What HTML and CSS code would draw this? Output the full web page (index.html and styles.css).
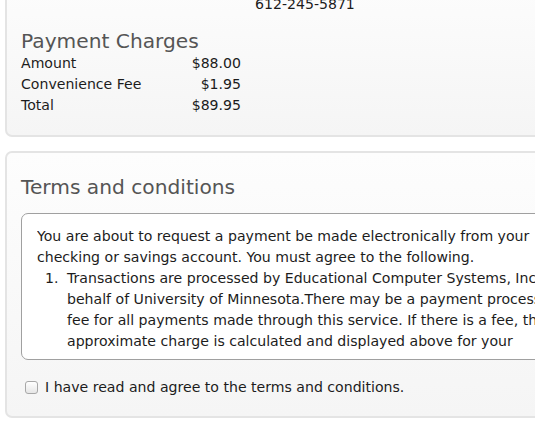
FILE: index.html
```html
<!DOCTYPE html>
<html>
<head>
<meta charset="utf-8">
<link rel="stylesheet" href="styles.css">
</head>
<body>
<section class="panel panel-charges">
  <div class="phone">612-245-5871</div>
  <h2 class="heading">Payment Charges</h2>
  <div class="charges">
    <div class="row"><span class="label">Amount</span><span class="value">$88.00</span></div>
    <div class="row"><span class="label">Convenience Fee</span><span class="value">$1.95</span></div>
    <div class="row"><span class="label">Total</span><span class="value">$89.95</span></div>
  </div>
</section>
<section class="panel panel-terms">
  <h2 class="heading">Terms and conditions</h2>
  <div class="terms-box">
    <div class="terms-scroll">
      <p class="terms-intro">You are about to request a payment be made electronically from your checking or savings account. You must agree to the following.</p>
      <ol class="terms-list">
        <li class="term"><span class="num">1.</span><span class="term-text">Transactions are processed by Educational Computer Systems, Inc. on behalf of University of Minnesota.There may be a payment processing fee for all payments made through this service. If there is a fee, the approximate charge is calculated and displayed above for your review.</span></li>
      </ol>
    </div>
  </div>
  <label class="agree"><input type="checkbox" class="check"><span>I have read and agree to the terms and conditions.</span></label>
</section>
</body>
</html>
```
FILE: styles.css
```css
html, body {
  margin: 0;
  padding: 0;
  overflow: hidden;
  background: #fff;
}
body {
  font-family: "DejaVu Sans", Verdana, sans-serif;
  font-size: 14.1px;
  line-height: 21px;
  color: #1c1c1c;
  width: 535px;
  height: 426px;
}
.panel {
  margin-left: 5px;
  width: 560px;
  border: 2px solid #e4e4e4;
  border-radius: 7px;
  background: linear-gradient(#fdfdfd, #f5f5f5);
  box-sizing: border-box;
}
.panel-charges {
  margin-top: -30px;
  padding: 22px 14px 8px;
  height: 167px;
}
.phone {
  margin-left: 234px;
  line-height: 21px;
}
.heading {
  margin: 0;
  font-weight: normal;
  font-size: 20.2px;
  color: #555;
  line-height: 24px;
}
.panel-charges .heading {
  margin-top: 14px;
}
.charges {
  width: 220px;
}
.row {
  display: flex;
  justify-content: space-between;
}
.panel-terms {
  margin-top: 14px;
  padding: 22px 14px 0;
  height: 267px;
}
.panel-terms .heading {
  margin-bottom: 14px;
}
.terms-box {
  width: 561px;
  height: 147px;
  box-sizing: border-box;
  border: 1px solid #a0a0a0;
  border-radius: 7px;
  background: #fff;
  padding: 12px 15px 0;
  overflow: hidden;
}
.terms-scroll {
  height: 127px;
  overflow: hidden;
}
.terms-intro {
  margin: 0;
}
.terms-list {
  margin: 0;
  padding-left: 8px;
  list-style: none;
}
.term {
  display: flex;
}
.num {
  flex: 0 0 22px;
}
.agree {
  display: flex;
  align-items: center;
  gap: 7px;
  margin-top: 17px;
  margin-left: 4px;
}
.check {
  appearance: none;
  -webkit-appearance: none;
  width: 13px;
  height: 13px;
  margin: 0;
  border: 1px solid #a8a8a8;
  border-radius: 3px;
  background: linear-gradient(#fff, #e6e6e6);
  box-sizing: border-box;
}
```
